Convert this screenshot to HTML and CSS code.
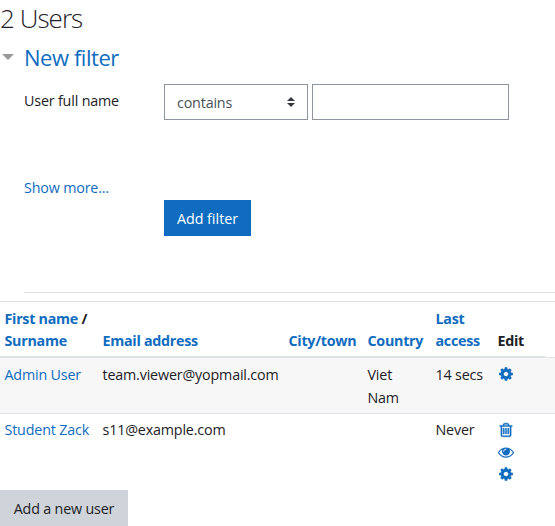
FILE: index.html
```html
<!DOCTYPE html>
<html lang="en">
<head>
<meta charset="utf-8">
<title>Users</title>
<link rel="stylesheet" href="styles.css">
</head>
<body>
<svg class="sprite" aria-hidden="true">
  <symbol id="cog" viewBox="0 0 1792 1792"><path d="M1152 896q0-106-75-181t-181-75-181 75-75 181 75 181 181 75 181-75 75-181zm512-109v222q0 12-8 23t-20 13l-185 28q-19 54-39 91 35 50 107 138 10 12 10 25t-9 23q-27 37-99 108t-94 71q-12 0-26-9l-138-108q-44 23-91 38-16 136-29 186-7 28-36 28h-222q-14 0-24.500-8.500t-11.500-21.500l-28-184q-49-16-90-37l-141 107q-10 9-25 9-14 0-25-11-126-114-165-168-7-10-7-23 0-12 8-23 15-21 51-66.500t54-70.500q-27-50-41-99l-183-27q-13-2-21-12.500t-8-23.500v-222q0-12 8-23t19-13l186-28q14-46 39-92-40-57-107-138-10-12-10-24 0-10 9-23 26-36 98.500-107.500t94.500-71.500q13 0 26 10l138 107q44-23 91-38 16-136 29-186 7-28 36-28h222q14 0 24.500 8.500t11.500 21.500l28 184q49 16 90 37l142-107q9-9 24-9 13 0 25 10 129 119 165 170 7 8 7 22 0 12-8 23-15 21-51 66.500t-54 70.500q26 50 41 98l183 28q13 2 21 12.500t8 23.500z"/></symbol>
  <symbol id="eye" viewBox="0 0 1792 1792"><path d="M1664 960q-152-236-381-353 61 104 61 225 0 185-131.500 316.500t-316.500 131.500-316.500-131.500-131.500-316.500q0-121 61-225-229 117-381 353 133 205 333.500 326.500t434.500 121.500 434.500-121.500 333.500-326.500zm-720-384q0-20-14-34t-34-14q-125 0-214.500 89.500t-89.500 214.500q0 20 14 34t34 14 34-14 14-34q0-86 61-147t147-61q20 0 34-14t14-34zm848 384q0 34-20 69-140 230-376.500 368.500t-499.500 138.500-499.500-139-376.500-368q-20-35-20-69t20-69q140-229 376.500-368t499.500-139 499.500 139 376.500 368q20 35 20 69z"/></symbol>
  <symbol id="trash" viewBox="0 0 1792 1792"><path d="M704 736v576q0 14-9 23t-23 9h-64q-14 0-23-9t-9-23v-576q0-14 9-23t23-9h64q14 0 23 9t9 23zm256 0v576q0 14-9 23t-23 9h-64q-14 0-23-9t-9-23v-576q0-14 9-23t23-9h64q14 0 23 9t9 23zm256 0v576q0 14-9 23t-23 9h-64q-14 0-23-9t-9-23v-576q0-14 9-23t23-9h64q14 0 23 9t9 23zm128 724v-948h-896v948q0 22 7 40.500t14.500 27 10.500 8.500h832q3 0 10.500-8.500t14.500-27 7-40.500zm-672-1076h448l-48-117q-7-9-17-11h-317q-10 2-17 11zm928 32v64q0 14-9 23t-23 9h-96v948q0 83-47 143.500t-113 60.500h-832q-66 0-113-58.500t-47-141.500v-952h-96q-14 0-23-9t-9-23v-64q0-14 9-23t23-9h309l70-167q15-37 54-63t79-26h320q40 0 79 26t54 63l70 167h309q14 0 23 9t9 23z"/></symbol>
</svg>
<h2 class="title">2 Users</h2>
<form class="filter">
  <h3 class="legend"><i class="caret"></i><a>New filter</a></h3>
  <div class="row">
    <span class="label">User full name</span>
    <div class="select"><span>contains</span><svg class="arrows" viewBox="0 0 8 10"><path d="M4 0L8 4H0zM4 10L0 6H8z"/></svg></div>
    <input class="text" type="text" aria-label="User full name">
  </div>
  <a class="more">Show more...</a>
  <button class="btn primary" type="button">Add filter</button>
  <hr class="rule">
</form>
<div class="table">
  <div class="tr head">
    <div class="th"><a>First name</a> /<br><a>Surname</a></div>
    <div class="th"><a>Email address</a></div>
    <div class="th"><a>City/town</a></div>
    <div class="th"><a>Country</a></div>
    <div class="th"><a>Last<br>access</a></div>
    <div class="th">Edit</div>
    <div class="th end"></div>
  </div>
  <div class="tr odd">
    <div class="td"><a>Admin User</a></div>
    <div class="td">team.viewer@yopmail.com</div>
    <div class="td"></div>
    <div class="td">Viet<br>Nam</div>
    <div class="td">14 secs</div>
    <div class="td icons"><svg><use href="#cog"/></svg></div>
    <div class="td"></div>
  </div>
  <div class="tr last">
    <div class="td"><a>Student Zack</a></div>
    <div class="td">s11@example.com</div>
    <div class="td"></div>
    <div class="td"></div>
    <div class="td">Never</div>
    <div class="td icons"><svg class="trash"><use href="#trash"/></svg><svg><use href="#eye"/></svg><svg><use href="#cog"/></svg></div>
    <div class="td"></div>
  </div>
</div>
<button class="btn secondary" type="button">Add a new user</button>
</body>
</html>
```
FILE: styles.css
```css
* { box-sizing: border-box; }
body {
  margin: 0;
  width: 555px;
  height: 526px;
  overflow: hidden;
  background: #fff;
  color: #1d2125;
  font: 14.3px/22px "Open Sans", "Noto Sans", sans-serif;
  letter-spacing: -0.17px;
}
a { color: #0f6cbf; }
.sprite { display: none; }
.title { margin: 0; height: 42px; padding-top: 1px; font-size: 26px; font-weight: 300; line-height: 34px; letter-spacing: -0.95px; }
.legend { display: flex; align-items: center; margin: 0; height: 32px; font-size: 22px; font-weight: 400; line-height: 32px; letter-spacing: -0.45px; }
.legend a { margin-bottom: 2px; }
.caret { width: 12px; height: 6px; margin: 0 10px 2px 2px; background: #999; clip-path: polygon(0 0, 100% 0, 50% 100%); }
.filter { height: 259px; display: flex; flex-direction: column; }
.row { display: flex; height: 36px; margin-top: 10px; padding-left: 24px; }
.label { width: 140px; padding-top: 6px; }
.select { display: flex; justify-content: space-between; align-items: center; width: 144px; height: 36px; padding: 0 12px; border: 1px solid #8f959e; color: #495057; }
.select span { padding-top: 2px; }
.arrows { width: 8px; height: 10px; fill: #343a40; }
.text { width: 197px; height: 36px; margin-left: 4px; border: 1px solid #8f959e; background: #fff; }
.more { margin: 57px 0 0 24px; height: 23px; }
.btn { border: 0; padding: 0; height: 36px; font: inherit; letter-spacing: inherit; flex: none; }
.primary { width: 87px; margin-left: 164px; padding-top: 1px; background: #0f6cbf; color: #fff; letter-spacing: 0; }
.rule { width: 531px; height: 1px; margin: 56px 0 0 24px; border: 0; background: #dee2e6; }
.tr { display: grid; grid-template-columns: 98px 186px 79px 68px 62px 52px 10px; }
.head { height: 57px; border-top: 1px solid #dee2e6; font-weight: 700; letter-spacing: -0.28px; }
.th { padding: 5px 0 4px 4.5px; border-bottom: 2px solid #dee2e6; align-content: end; white-space: nowrap; }
.th.end { border-bottom-width: 1px; }
.td { padding: 5px 0 0 4.5px; white-space: nowrap; line-height: 23px; }
.odd { height: 56px; background: #f7f7f7; border-bottom: 1px solid #dee2e6; }
.last { height: 76px; }
.last .td { padding-top: 4px; }
.icons svg { display: block; width: 16px; height: 16px; margin: 3px 0 6px; fill: #0f6cbf; }
.last .icons svg { margin-top: 4px; margin-bottom: 6px; }
.icons .trash { stroke: #0f6cbf; stroke-width: 50px; }
.secondary { display: block; width: 128px; padding-top: 1px; background: #ced4da; color: #1d2125; }
```
